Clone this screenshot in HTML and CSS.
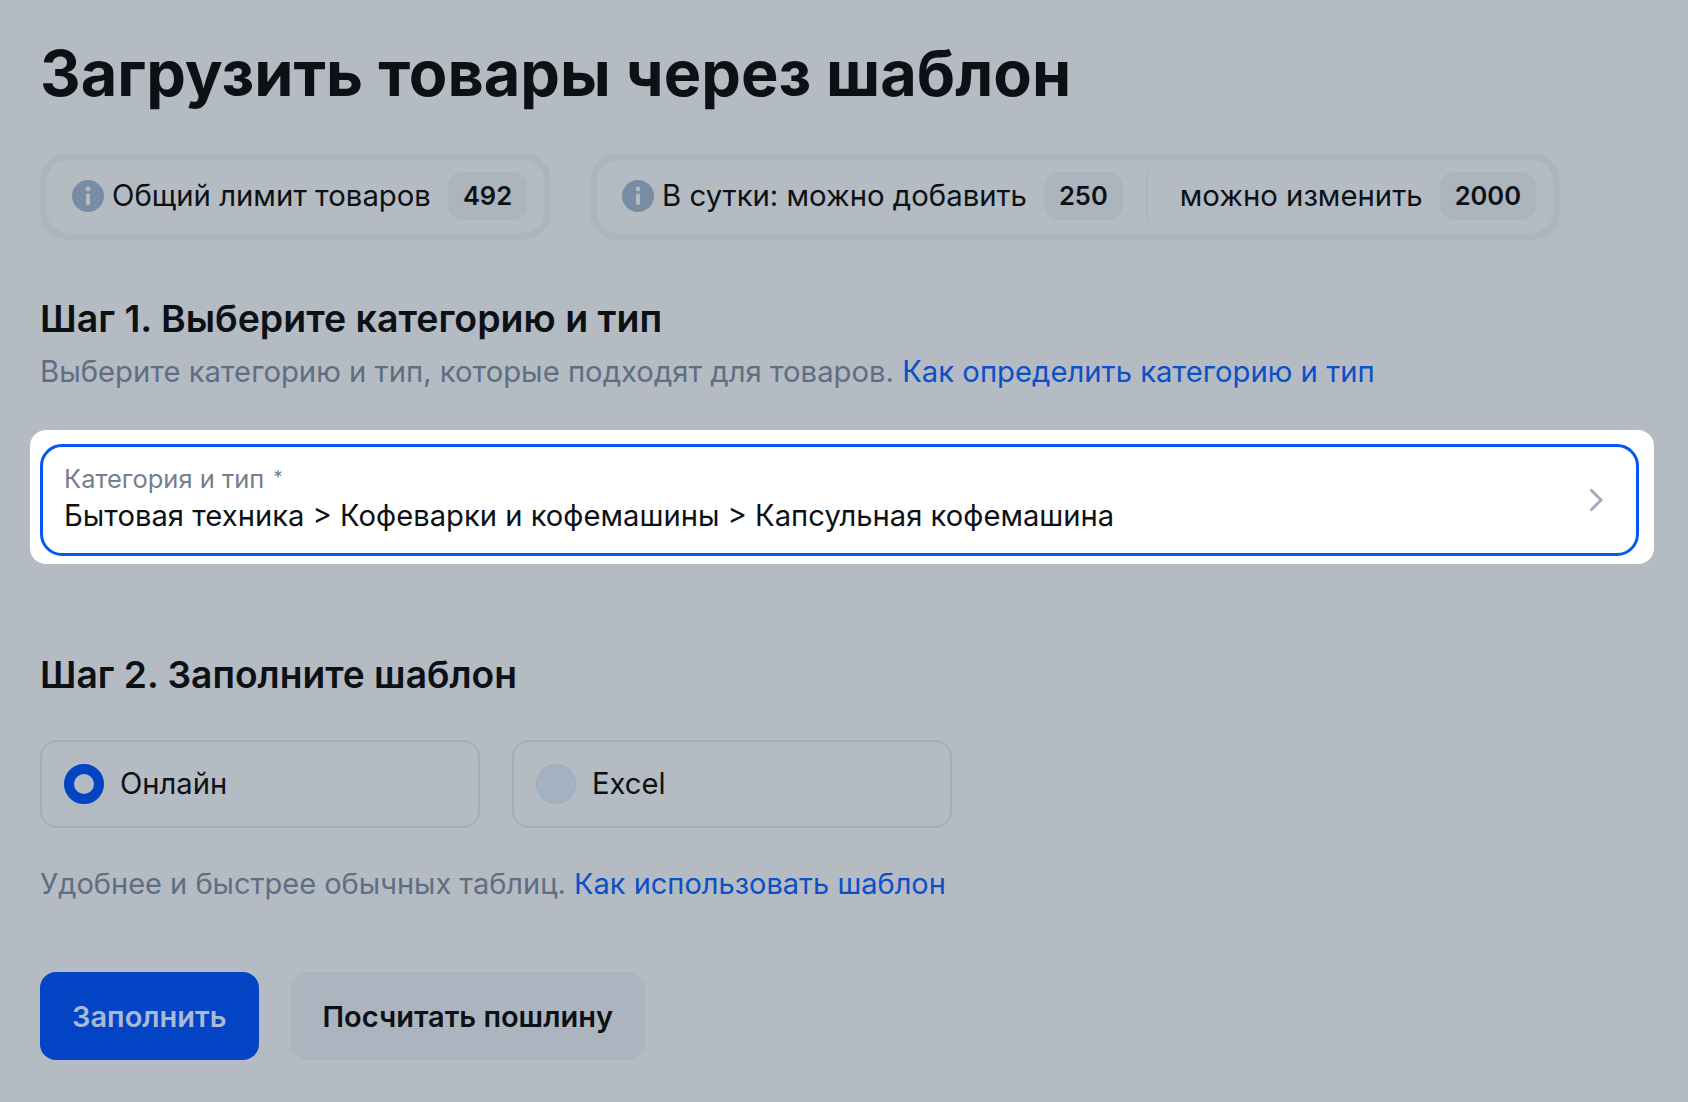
FILE: index.html
```html
<!DOCTYPE html>
<html lang="ru">
<head>
<meta charset="utf-8">
<title>Загрузить товары через шаблон</title>
<link rel="stylesheet" href="styles.css">
</head>
<body>
<main class="page">
  <h1 class="title">Загрузить товары через шаблон</h1>
  <div class="limits">
    <div class="limit">
      <svg class="info" viewBox="0 0 32 32"><circle cx="16" cy="16" r="16" fill="#788ca3"/><circle cx="16" cy="9" r="2.4" fill="#b4bbc3"/><rect x="14" y="13.5" width="4" height="11.5" rx="1.6" fill="#b4bbc3"/></svg>
      <span class="limit-text">Общий лимит товаров</span>
      <span class="badge">492</span>
    </div>
    <div class="limit">
      <svg class="info" viewBox="0 0 32 32"><circle cx="16" cy="16" r="16" fill="#788ca3"/><circle cx="16" cy="9" r="2.4" fill="#b4bbc3"/><rect x="14" y="13.5" width="4" height="11.5" rx="1.6" fill="#b4bbc3"/></svg>
      <span class="limit-text">В сутки: можно добавить</span>
      <span class="badge">250</span>
      <span class="divider"></span>
      <span class="limit-text">можно изменить</span>
      <span class="badge">2000</span>
    </div>
  </div>

  <h2 class="step step-one">Шаг 1. Выберите категорию и тип</h2>
  <p class="hint hint-one">Выберите категорию и тип, которые подходят для товаров. <a class="link" href="#">Как определить категорию и тип</a></p>

  <div class="spotlight">
    <div class="field">
      <div class="field-text">
        <span class="field-label">Категория и тип <span class="star">*</span></span>
        <span class="field-value">Бытовая техника &gt; Кофеварки и кофемашины &gt; Капсульная кофемашина</span>
      </div>
      <svg class="chevron" viewBox="0 0 16 26"><path d="M2.5 2.5 L13 13 L2.5 23.5" fill="none" stroke="#a3aeba" stroke-width="3"/></svg>
    </div>
  </div>

  <h2 class="step step-two">Шаг 2. Заполните шаблон</h2>
  <div class="options">
    <label class="option"><span class="radio radio-on"></span><span class="option-text">Онлайн</span></label>
    <label class="option"><span class="radio"></span><span class="option-text">Excel</span></label>
  </div>
  <p class="hint hint-two">Удобнее и быстрее обычных таблиц. <a class="link" href="#">Как использовать шаблон</a></p>
  <div class="actions">
    <button class="btn btn-primary">Заполнить</button>
    <button class="btn btn-secondary">Посчитать пошлину</button>
  </div>
</main>
</body>
</html>
```
FILE: styles.css
```css
* { box-sizing: border-box; }
html, body { margin: 0; height: 100%; }
body {
  background: #b4bbc3;
  color: #0c1116;
  font-family: Inter, "Noto Sans", sans-serif;
  overflow: hidden;
}
.page { padding: 34px 0 0 40px; }
.title {
  margin: 0;
  font-size: 63px;
  line-height: 78px;
  font-weight: 700;
  letter-spacing: 0;
}
.limits { display: flex; gap: 39px; margin-top: 41px; }
.limit {
  display: flex;
  align-items: center;
  height: 87px;
  padding: 0 17px 2px 25px;
  border: 7px solid #acb4bd;
  border-radius: 28px;
}
.info { width: 32px; height: 32px; margin-right: 8px; flex: none; }
.limit-text { font-size: 29.3px; font-weight: 400; }
.badge {
  margin-left: 17px;
  height: 48px;
  padding: 0 15px;
  display: flex;
  align-items: center;
  justify-content: center;
  border-radius: 14px;
  background: #acb4bd;
  font-size: 25.5px;
  font-weight: 600;
}
.divider { width: 2px; height: 48px; margin: 0 32px 0 23px; background: #acb4bd; }
.step { margin: 0; line-height: 46px; font-weight: 600; }
.step-one { margin-top: 56px; font-size: 37.5px; }
.hint { margin: 0; font-size: 29.25px; line-height: 40px; color: #5f6e82; }
.hint-one { margin-top: 10px; }
.link { color: #0c4fc8; text-decoration: none; }
.spotlight {
  width: 1624px;
  margin: 38px 0 0 -10px;
  padding: 14px 15px 8px 10px;
  background: #fff;
  border-radius: 16px;
}
.field {
  display: flex;
  align-items: center;
  justify-content: space-between;
  height: 112px;
  padding: 0 32px 0 21px;
  border: 3.5px solid #0557f5;
  border-radius: 22px;
}
.field-text { display: flex; flex-direction: column; gap: 1px; padding-bottom: 3px; }
.field-label { font-size: 25.5px; line-height: 32px; color: #74808e; }
.star { font-size: 18px; vertical-align: 4px; margin-left: 2px; }
.field-value { font-size: 29.2px; line-height: 40px; color: #0c1116; }
.chevron { width: 16px; height: 26px; }
.step-two { margin-top: 88px; font-size: 37.2px; }
.options { display: flex; gap: 32px; margin-top: 42px; }
.option {
  display: flex;
  align-items: center;
  width: 440px;
  height: 88px;
  padding-left: 22px;
  border: 2px solid #a5afba;
  border-radius: 16px;
  font-size: 29.2px;
}
.option-text { padding-bottom: 2px; }
.radio {
  width: 40px;
  height: 40px;
  margin-right: 16px;
  border-radius: 50%;
  background: #a4b2c1;
  border: 2px solid #9fadbc;
}
.radio-on { background: transparent; border: 10px solid #0344c4; }
.hint-two { margin-top: 36px; font-size: 29px; }
.actions { display: flex; gap: 32px; margin-top: 68px; }
.btn {
  height: 88px;
  border: 0;
  border-radius: 16px;
  padding: 0 32px;
  font: 600 29px Inter, "Noto Sans", sans-serif;
}
.btn-primary { background: #0344c4; color: #a9bad6; }
.btn-secondary { background: #acb4bf; color: #0c1116; }
```
